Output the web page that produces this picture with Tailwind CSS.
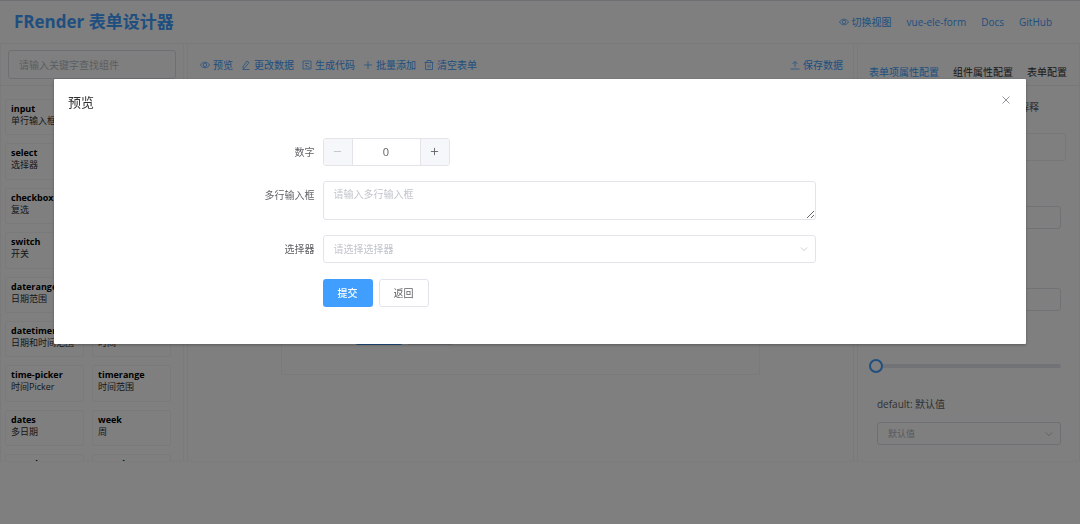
<!DOCTYPE html>
<html lang="zh-CN">
<head>
<meta charset="utf-8">
<meta name="viewport" content="width=device-width, initial-scale=1">
<title>FRender 表单设计器</title>
<script src="https://cdn.jsdelivr.net/npm/@tailwindcss/browser@4"></script>
</head>
<body class="h-screen overflow-hidden bg-white font-['Open_Sans','Noto_Sans_CJK_SC',sans-serif] text-[10px] leading-4 text-[#303133]">

<svg class="hidden" aria-hidden="true">
  <symbol id="eye" viewBox="0 0 20 20"><path d="M1 10C5 2.500 15 2.500 19 10C15 17.500 5 17.500 1 10Z"/><circle cx="10" cy="10" r="3.500"/></symbol>
  <symbol id="edit" viewBox="0 0 20 20"><path d="M4 13L12 2L16 5L8 15L4 17ZM3 19H17"/></symbol>
  <symbol id="doc" viewBox="0 0 20 20"><path d="M2 2H18V18H2ZM6 7H14M6 11H10M8 15L11 13L15 15"/></symbol>
  <symbol id="plus" viewBox="0 0 20 20"><path d="M10 2V18M2 10H18"/></symbol>
  <symbol id="minus" viewBox="0 0 20 20"><path d="M2 10H18"/></symbol>
  <symbol id="trash" viewBox="0 0 20 20"><path d="M1 5H19M6 5V1H14V5M3 5V19H17V5M8 9V15M12 9V15"/></symbol>
  <symbol id="upload" viewBox="0 0 20 20"><path d="M10 14V3M5 8L10 3L15 8M1 18H19"/></symbol>
  <symbol id="down" viewBox="0 0 20 20"><path d="M2 6L10 14L18 6"/></symbol>
  <symbol id="close" viewBox="0 0 20 20"><path d="M3 3L17 17M17 3L3 17"/></symbol>
</svg>

<div class="flex h-[calc(100%-62px)] flex-col border-t border-[#dcdfe6]">
  <header class="flex h-[43px] shrink-0 items-center justify-between border-b border-[#f5f5f5] pr-7 pl-[14px] text-[#409eff]">
    <h1 class="text-[17px] leading-6 font-bold">FRender 表单设计器</h1>
    <nav class="flex items-center gap-[15px]">
      <button type="button" class="flex items-center gap-[3px]"><svg class="size-[10px] fill-none stroke-current stroke-[1.5]"><use href="#eye"/></svg>切换视图</button>
      <a href="#ele">vue-ele-form</a>
      <a href="#docs">Docs</a>
      <a href="#github">GitHub</a>
    </nav>
  </header>

  <main class="flex min-h-0 flex-1 border-b border-[#f8f8f8]">
    <aside class="flex w-[184px] shrink-0 flex-col overflow-hidden border-x border-[#f5f5f5]">
      <div class="shrink-0 border-b border-[#f2f2f2] px-[7px] py-[6px]">
        <input type="text" aria-label="查找组件" placeholder="请输入关键字查找组件" class="h-[29px] w-full rounded-[3px] border border-[#dcdfe6] px-[10px] placeholder:text-[#b8bbc2]">
      </div>
      <ul class="mr-3 ml-1 grid h-[449px] shrink-0 grid-cols-2 grid-rows-10 gap-2 pt-[13px] leading-3 *:overflow-hidden *:rounded-[2px] *:border *:border-[#f5f5f5] *:px-[5px] *:pt-[3px] *:text-[9px] *:whitespace-nowrap">
        <li><b class="block text-black">input</b>单行输入框</li><li><b class="block text-black">textarea</b>多行输入框</li>
        <li><b class="block text-black">select</b>选择器</li><li><b class="block text-black">radio</b>单选</li>
        <li><b class="block text-black">checkbox</b>复选</li><li><b class="block text-black">number</b>数字</li>
        <li><b class="block text-black">switch</b>开关</li><li><b class="block text-black">date</b>日期</li>
        <li><b class="block text-black">daterange</b>日期范围</li><li><b class="block text-black">datetime</b>日期时间</li>
        <li><b class="block text-black">datetimerange</b>日期和时间范围</li><li><b class="block text-black">time</b>时间</li>
        <li><b class="block text-black">time-picker</b>时间Picker</li><li><b class="block text-black">timerange</b>时间范围</li>
        <li><b class="block text-black">dates</b>多日期</li><li><b class="block text-black">week</b>周</li>
        <li><b class="block text-black">month</b>月份</li><li><b class="block text-black">month</b>月份</li>
      </ul>
    </aside>

    <section class="mx-[3px] flex min-w-0 flex-1 flex-col border-x border-[#f5f5f5]">
      <div class="flex h-[42px] shrink-0 items-center gap-2 border-b border-[#f2f2f2] pr-[10px] pl-3 text-[#409eff] *:flex *:items-center *:gap-[3px]">
        <button type="button"><svg class="size-[10px] fill-none stroke-current stroke-[1.5]"><use href="#eye"/></svg>预览</button>
        <button type="button"><svg class="size-[10px] fill-none stroke-current stroke-[1.5]"><use href="#edit"/></svg>更改数据</button>
        <button type="button"><svg class="size-[10px] fill-none stroke-current stroke-[1.5]"><use href="#doc"/></svg>生成代码</button>
        <button type="button"><svg class="size-[10px] fill-none stroke-current stroke-[1.5]"><use href="#plus"/></svg>批量添加</button>
        <button type="button"><svg class="size-[10px] fill-none stroke-current stroke-[1.5]"><use href="#trash"/></svg>清空表单</button>
        <button type="button" class="ml-auto"><svg class="size-[10px] fill-none stroke-current stroke-[1.5]"><use href="#upload"/></svg>保存数据</button>
      </div>
      <div class="mx-[93px] flex h-[289px] shrink-0 items-end gap-[3px] border border-[#f5f5f5] px-[73px] pb-[29px]">
        <button type="button" class="h-7 w-12 rounded-[3px] bg-[#409eff] text-white">提交</button>
        <button type="button" class="h-7 w-12 rounded-[3px] border border-[#dcdfe6]">返回</button>
      </div>
    </section>

    <aside class="flex w-[223px] shrink-0 flex-col border-x border-[#f5f5f5]">
      <div role="tablist" class="flex h-[42px] shrink-0 items-end justify-between border-b border-[#eceef2] pr-3 pb-[5px] pl-[11px] whitespace-nowrap">
        <button type="button" role="tab" aria-selected="true" class="text-[#409eff]">表单项属性配置</button>
        <button type="button" role="tab">组件属性配置</button>
        <button type="button" role="tab">表单配置</button>
      </div>
      <form class="flex flex-col pr-[18px] pl-[19px] text-[#606266]">
        <p class="mt-[13px] mr-[22px] text-right whitespace-nowrap">表单项的类型、标签和解释</p>
        <div class="mt-[18px] -mr-[5px] h-7 rounded-[2px] border border-[#eceef2]"></div>
        <label for="f-field" class="mt-[19px]">field: 字段名</label>
        <input id="f-field" class="mt-[10px] h-[23px] rounded-[3px] border border-[#e2e4ea]">
        <label for="f-label" class="mt-[33px]">label: 标签名</label>
        <input id="f-label" class="mt-[10px] h-[23px] rounded-[3px] border border-[#e2e4ea]">
        <label for="f-span" class="mt-[18px]">layout: 宽度</label>
        <input id="f-span" type="range" min="0" max="24" value="0" class="mt-[14px] -ml-2 h-[14px] appearance-none bg-transparent [&::-webkit-slider-runnable-track]:h-1 [&::-webkit-slider-runnable-track]:rounded-full [&::-webkit-slider-runnable-track]:bg-[#e4e7ed] [&::-webkit-slider-thumb]:-mt-[5px] [&::-webkit-slider-thumb]:size-[14px] [&::-webkit-slider-thumb]:appearance-none [&::-webkit-slider-thumb]:rounded-full [&::-webkit-slider-thumb]:border-2 [&::-webkit-slider-thumb]:border-[#409eff] [&::-webkit-slider-thumb]:bg-white">
        <label for="f-default" class="mt-[23px]">default: 默认值</label>
        <div class="mt-[10px] grid">
          <select id="f-default" class="col-start-1 row-start-1 h-[23px] appearance-none rounded-[3px] border border-[#dcdfe6] px-[10px] text-[9px] text-[#b0b3ba]"><option>默认值</option></select>
          <svg class="pointer-events-none col-start-1 row-start-1 mr-2 size-2 self-center justify-self-end fill-none stroke-[#b0b3ba] stroke-2"><use href="#down"/></svg>
        </div>
      </form>
    </aside>
  </main>
</div>

<div class="fixed inset-0 bg-black/50">
  <div role="dialog" aria-modal="true" aria-labelledby="dialog-title" class="mx-auto mt-[15vh] w-[90%] rounded-[1px] bg-white pb-[37px] shadow-[0_1px_3px_rgba(0,0,0,0.3)]">
    <div class="flex items-start justify-between px-[14px] pt-[14px]">
      <h2 id="dialog-title" class="text-[13px] leading-[18px]">预览</h2>
      <button type="button" aria-label="关闭" class="mt-[2px] mr-px text-[#909399]"><svg class="size-[10px] fill-none stroke-current stroke-2"><use href="#close"/></svg></button>
    </div>
    <form class="mx-auto mt-[27px] grid w-[551px] max-w-full grid-cols-[50px_1fr] gap-x-2 gap-y-[15px] text-[#606266]">
      <label for="num" class="text-right leading-7">数字</label>
      <div class="flex h-7 w-[127px] overflow-hidden rounded-[3px] border border-[#e2e4ea]">
        <button type="button" aria-label="减少" class="grid w-[29px] shrink-0 place-items-center border-r border-[#e2e4ea] bg-[#f5f7fa] text-[#c0c4cc]"><svg class="size-[9px] fill-none stroke-current stroke-2"><use href="#minus"/></svg></button>
        <input id="num" type="text" value="0" class="min-w-0 flex-1 text-center text-[11px]">
        <button type="button" aria-label="增加" class="grid w-[29px] shrink-0 place-items-center border-l border-[#e2e4ea] bg-[#f5f7fa]"><svg class="size-[9px] fill-none stroke-current stroke-2"><use href="#plus"/></svg></button>
      </div>
      <label for="area" class="text-right leading-7 whitespace-nowrap">多行输入框</label>
      <textarea id="area" placeholder="请输入多行输入框" class="block h-[39px] w-full resize-y rounded-[3px] border border-[#e2e4ea] px-[10px] py-1 placeholder:text-[#c0c4cc]"></textarea>
      <label for="sel" class="text-right leading-7">选择器</label>
      <div class="grid">
        <select id="sel" class="col-start-1 row-start-1 h-7 appearance-none rounded-[3px] border border-[#e2e4ea] px-[10px] text-[#c0c4cc]"><option>请选择选择器</option></select>
        <svg class="pointer-events-none col-start-1 row-start-1 mr-2 size-2 self-center justify-self-end fill-none stroke-[#c0c4cc] stroke-2"><use href="#down"/></svg>
      </div>
      <div class="col-start-2 mt-px flex gap-[6px]">
        <button type="submit" class="h-7 w-[50px] rounded-[3px] bg-[#409eff] font-medium text-white">提交</button>
        <button type="button" class="h-7 w-[50px] rounded-[3px] border border-[#e2e4ea]">返回</button>
      </div>
    </form>
  </div>
</div>
</body>
</html>
